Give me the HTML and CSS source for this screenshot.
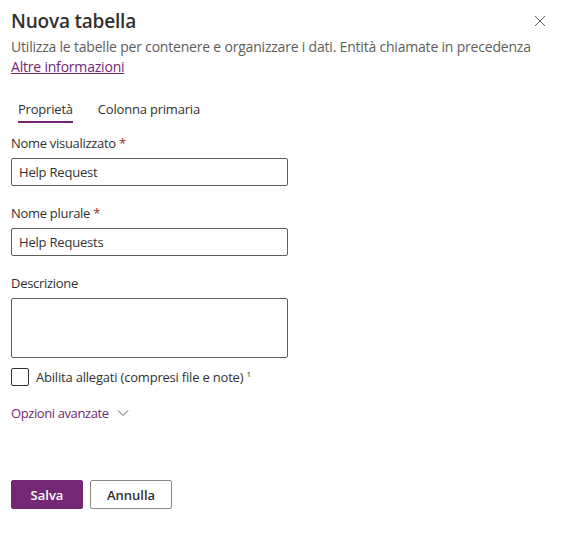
FILE: index.html
```html
<!DOCTYPE html>
<html lang="it">
<head>
    <meta charset="UTF-8">
    <meta name="viewport" content="width=device-width, initial-scale=1.0">
    <title>Nuova tabella</title>
    <link rel="stylesheet" href="styles.css">
</head>
<body>
    <div class="panel">
        <div class="header">
            <h1>Nuova tabella</h1>
            <button class="close" type="button" aria-label="Chiudi">
                <svg width="12" height="12" viewBox="0 0 12 12">
                    <path d="M1 1 L11 11 M11 1 L1 11" stroke="#605e5c" stroke-width="1" fill="none"/>
                </svg>
            </button>
        </div>
        <p class="intro">
            Utilizza le tabelle per contenere e organizzare i dati. Entità chiamate in precedenza<br>
            <a class="more" href="#">Altre informazioni</a>
        </p>

        <div class="tabs">
            <span class="tab active">Proprietà</span>
            <span class="tab">Colonna primaria</span>
        </div>

        <form>
            <div class="field">
                <label for="displayName">Nome visualizzato <span class="req">*</span></label>
                <input type="text" id="displayName" value="Help Request">
            </div>
            <div class="field">
                <label for="pluralName">Nome plurale <span class="req">*</span></label>
                <input type="text" id="pluralName" value="Help Requests">
            </div>
            <div class="field">
                <label for="description">Descrizione</label>
                <textarea id="description"></textarea>
            </div>
            <label class="check">
                <span class="box"></span>
                <span>Abilita allegati (compresi file e note) <sup>1</sup></span>
            </label>
            <div class="advanced">
                Opzioni avanzate
                <svg width="12" height="8" viewBox="0 0 12 8">
                    <path d="M1 1.5 L6 6.5 L11 1.5" stroke="#605e5c" stroke-width="1" fill="none"/>
                </svg>
            </div>
            <div class="actions">
                <button type="button" class="btn primary">Salva</button>
                <button type="button" class="btn">Annulla</button>
            </div>
        </form>
    </div>
</body>
</html>
```

FILE: styles.css
```css
body {
    margin: 0;
    background: #fff;
    font-family: "Open Sans", "Noto Sans", Arial, sans-serif;
    color: #323130;
}

.panel {
    padding: 9px 11px 0 11px;
}

.header {
    display: flex;
    justify-content: space-between;
    align-items: center;
}

h1 {
    margin: 0;
    font-size: 19px;
    font-weight: 600;
    line-height: 24px;
    letter-spacing: -0.2px;
}

.close {
    background: none;
    border: none;
    padding: 0;
    margin-right: 19px;
    width: 12px;
    height: 12px;
    display: flex;
}

.intro {
    margin: 4px 0 0 0;
    font-size: 14px;
    line-height: 20px;
    color: #605e5c;
    letter-spacing: -0.2px;
}

.more {
    color: #742774;
}

.tabs {
    display: flex;
    gap: 25px;
    margin-top: 22px;
    padding-left: 7px;
}

.tab {
    font-size: 13px;
    line-height: 20px;
    padding-bottom: 2px;
    letter-spacing: -0.2px;
}

.tab.active {
    border-bottom: 2px solid #742774;
}

form {
    margin-top: 10px;
}

.field {
    margin-bottom: 17px;
}

.field label {
    display: block;
    font-size: 13px;
    font-weight: 500;
    line-height: 20px;
    margin-bottom: 5px;
    letter-spacing: -0.3px;
}

.req {
    color: #a4262c;
}

input, textarea {
    display: block;
    box-sizing: border-box;
    width: 277px;
    height: 28px;
    border: 1px solid #605e5c;
    border-radius: 2px;
    padding: 0 7px;
    font-family: inherit;
    font-size: 13px;
    color: #323130;
    letter-spacing: -0.2px;
}

textarea {
    height: 60px;
    resize: none;
}

.check {
    display: flex;
    align-items: center;
    gap: 7px;
    margin-top: -7px;
    font-size: 13px;
    letter-spacing: -0.2px;
}

.box {
    width: 18px;
    height: 18px;
    box-sizing: border-box;
    border: 1px solid #323130;
    border-radius: 2px;
}

sup {
    font-size: 8px;
}

.advanced {
    display: flex;
    align-items: center;
    gap: 8px;
    margin-top: 18px;
    font-size: 13px;
    color: #742774;
    letter-spacing: -0.4px;
}

.actions {
    display: flex;
    gap: 7px;
    margin-top: 58px;
}

.btn {
    box-sizing: border-box;
    height: 29px;
    padding: 0 16px;
    min-width: 72px;
    border: 1px solid #8a8886;
    border-radius: 2px;
    background: #fff;
    font-family: inherit;
    font-size: 13px;
    font-weight: 600;
    color: #323130;
}

.btn:last-child {
    width: 82px;
}

.btn.primary {
    background: #742774;
    border-color: #742774;
    color: #fff;
}
```
